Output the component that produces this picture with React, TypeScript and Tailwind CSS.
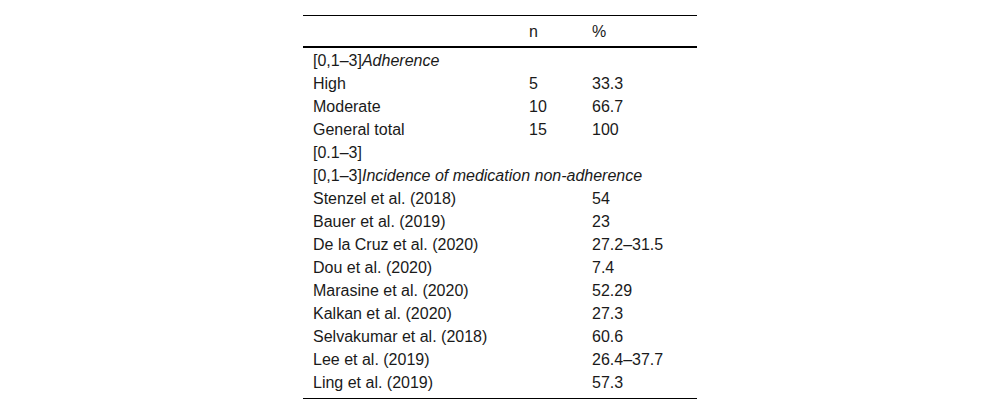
import React from "react";

const rows: { a: React.ReactNode; n?: string; p?: string }[] = [
  { a: <>[0,1–3]<i>Adherence</i></> },
  { a: "High", n: "5", p: "33.3" },
  { a: "Moderate", n: "10", p: "66.7" },
  { a: "General total", n: "15", p: "100" },
  { a: "[0.1–3]" },
  { a: <>[0,1–3]<i>Incidence of medication non-adherence</i></> },
  { a: "Stenzel et al. (2018)", p: "54" },
  { a: "Bauer et al. (2019)", p: "23" },
  { a: "De la Cruz et al. (2020)", p: "27.2–31.5" },
  { a: "Dou et al. (2020)", p: "7.4" },
  { a: "Marasine et al. (2020)", p: "52.29" },
  { a: "Kalkan et al. (2020)", p: "27.3" },
  { a: "Selvakumar et al. (2018)", p: "60.6" },
  { a: "Lee et al. (2019)", p: "26.4–37.7" },
  { a: "Ling et al. (2019)", p: "57.3" },
];

export default function App() {
  return (
    <div
      className="w-[1000px] h-[415px] bg-white pt-[15px] text-[16px] text-[#1a1a1a]"
      style={{ fontFamily: '"Liberation Sans", Arial, sans-serif' }}
    >
      <div className="w-[394px] ml-[303px] border-t border-b border-black pb-[5px]">
        <div className="flex h-[32px] items-center border-b-2 border-black pt-[2px] leading-none">
          <div className="w-[216px] pl-[10px]"></div>
          <div className="w-[63px] pl-[10px]">n</div>
          <div className="w-[115px] pl-[10px]">%</div>
        </div>
        {rows.map((r, i) => (
          <div key={i} className="flex h-[23px] items-center leading-none pt-[2px]">
            <div className="w-[216px] pl-[10px] whitespace-nowrap">{r.a}</div>
            <div className="w-[63px] pl-[10px]">{r.n ?? ""}</div>
            <div className="w-[115px] pl-[10px]">{r.p ?? ""}</div>
          </div>
        ))}
      </div>
    </div>
  );
}
